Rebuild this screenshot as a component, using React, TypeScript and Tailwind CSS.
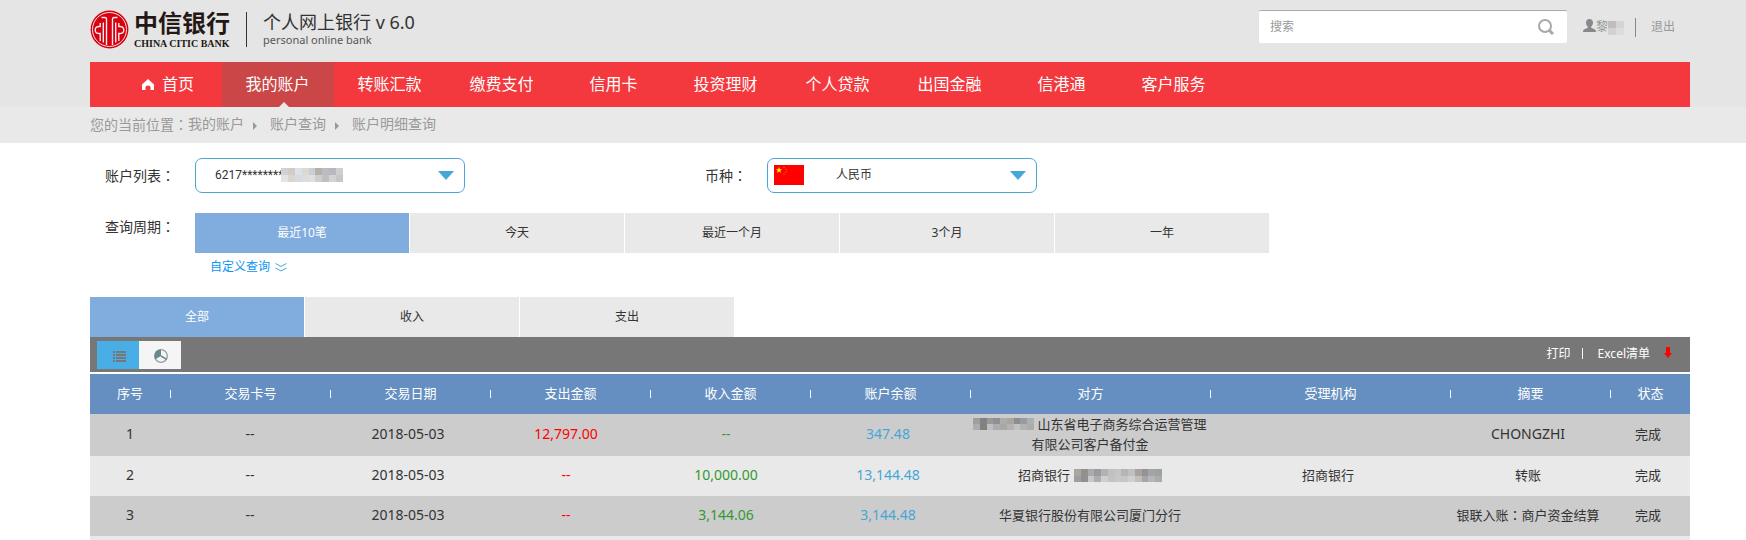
import React from "react";

const FONT = "font-['Noto_Sans','Noto_Sans_CJK_SC',sans-serif]";

const navItems = ["我的账户", "转账汇款", "缴费支付", "信用卡", "投资理财", "个人贷款", "出国金融", "信港通", "客户服务"];
const periods = ["最近10笔", "今天", "最近一个月", "3个月", "一年"];
const tabs = ["全部", "收入", "支出"];
const columns = [
  { name: "序号", width: "w-[5%]" },
  { name: "交易卡号", width: "w-[10%]" },
  { name: "交易日期", width: "w-[10%]" },
  { name: "支出金额", width: "w-[10%]" },
  { name: "收入金额", width: "w-[10%]" },
  { name: "账户余额", width: "w-[10%]" },
  { name: "对方", width: "w-[15%]" },
  { name: "受理机构", width: "w-[15%]" },
  { name: "摘要", width: "w-[10%]" },
  { name: "状态", width: "w-[5%]" },
];

function Mask({ rows, cell, className }: { rows: string[][]; cell: number; className: string }) {
  return (
    <svg
      className={className}
      viewBox={`0 0 ${rows[0].length * cell} ${rows.length * cell}`}
      preserveAspectRatio="none"
      shapeRendering="crispEdges"
      aria-hidden="true"
    >
      {rows.map((row, y) =>
        row.map((fill, x) => <rect key={`${x}-${y}`} x={x * cell} y={y * cell} width={cell} height={cell} fill={fill} />),
      )}
    </svg>
  );
}

const cardMask = [
  ["#cfd2d6", "#d3cbc6", "#dbe2e8", "#dad9d6", "#cccfd2", "#b8b1a9", "#b9bdc2", "#b5b8bc", "#cfcfcf"],
  ["#e3e3e3", "#dad5d1", "#d8dadd", "#dcdcdc", "#dde0e3", "#d0cec9", "#bfbfbf", "#d4d2d3", "#c5c8ca"],
];
const nameMask = [
  ["#c1bcbd", "#d2d4d6"],
  ["#d3d2d2", "#dbdcdd"],
];
const payeeMask = [
  ["#a09f9e", "#808285", "#9b9996", "#8e9095", "#adadac", "#aaa59f", "#8f8e8d", "#999ba2", "#adb0b2"],
  ["#adadad", "#85807c", "#bdc0c2", "#adadb0", "#a8a8a8", "#b2b2b4", "#c4c2c0", "#b2b2b3", "#acacac"],
];
const senderMask = [
  ["#aba59f", "#929190", "#a9abaf", "#9b9ba1", "#b1b2b4", "#c0c1c4", "#c5c6c6", "#b5b5b5", "#bfc0c4", "#a8a29d", "#929297", "#a2a4a5", "#9ea2a2"],
  ["#9f9e9d", "#92908f", "#c6c9cc", "#adadb1", "#d2cecc", "#c2c3c7", "#c7c9c7", "#c6c6c6", "#cecfd2", "#c2bdb7", "#a4a6a8", "#b6b5b8", "#a8acae"],
];

function BankEmblem() {
  return (
    <svg className="size-[39px]" viewBox="0 0 39 39" aria-hidden="true">
      <circle cx="19.5" cy="19.5" r="18.9" fill="#d7000f" />
      <circle cx="19.5" cy="19.5" r="17" fill="none" stroke="#f3e6e6" strokeWidth="1" />
      <g fill="none" stroke="#f6ecec" strokeWidth="1.4">
        <path d="M11.500 7.500h3.500q1.500 0 1.500 2V35M27.500 7.500h-3.500q-1.500 0-1.500 2V35" />
        <path d="M13.300 12.500v20M25.700 12.500v20" />
        <path d="M10.200 13v3.500q-5-.5-5 3.500t5 3.500V31M28.800 13v3.500q5-.5 5 3.500t-5 3.500V31" />
      </g>
    </svg>
  );
}

/* Vertically and horizontally centred full-width colon */
function Colon() {
  return <span className="font-['Noto_Sans_CJK_TC',sans-serif]">：</span>;
}

function Caret() {
  return (
    <svg className="pointer-events-none absolute right-[11px] top-[13px] h-[9px] w-4" viewBox="0 0 16 9" aria-hidden="true">
      <path d="M0 0h16L8 9z" fill="#46a7d6" />
    </svg>
  );
}

function Crumb({ children }: { children: React.ReactNode }) {
  return (
    <>
      <svg className="ml-[9px] mr-[13px] mt-1 h-2 w-1" viewBox="0 0 4 8" aria-hidden="true">
        <path d="M0 0l4 4-4 4z" fill="#999" />
      </svg>
      <a href="#">{children}</a>
    </>
  );
}

function SegmentButton({ label, active }: { label: string; active: boolean }) {
  return (
    <button
      type="button"
      className={`h-10 w-[214px] text-xs ${active ? "bg-[#80acde] text-white" : "bg-[#e9e9e9] text-[#333]"}`}
    >
      {label}
    </button>
  );
}

type Row = {
  no: string;
  date: string;
  out: string;
  income: string;
  balance: string;
  party: React.ReactNode;
  org: string;
  memo: React.ReactNode;
};

const rows: Row[] = [
  {
    no: "1",
    date: "2018-05-03",
    out: "12,797.00",
    income: "--",
    balance: "347.48",
    party: (
      <>
        <Mask rows={payeeMask} cell={7} className="mr-[3px] inline-block h-3 w-[61px] align-[-1px]" />
        山东省电子商务综合运营管理
        <br />
        有限公司客户备付金
      </>
    ),
    org: "",
    memo: <span className="text-sm leading-5">CHONGZHI</span>,
  },
  {
    no: "2",
    date: "2018-05-03",
    out: "--",
    income: "10,000.00",
    balance: "13,144.48",
    party: (
      <>
        招商银行
        <Mask rows={senderMask} cell={7} className="ml-1 inline-block h-[13px] w-[88px] align-[-2px]" />
      </>
    ),
    org: "招商银行",
    memo: "转账",
  },
  {
    no: "3",
    date: "2018-05-03",
    out: "--",
    income: "3,144.06",
    balance: "3,144.48",
    party: "华夏银行股份有限公司厦门分行",
    org: "",
    memo: (
      <>
        银联入账
        <Colon />
        商户资金结算
      </>
    ),
  },
];

export default function App() {
  return (
    <div className={`${FONT} h-screen overflow-hidden bg-white text-[#333]`}>
      <header className="bg-[#e5e5e5] pl-[90px] pr-14">
        <div className="flex h-[62px] items-start justify-between">
          <div className="flex items-start pt-[10px]">
            <a href="#" className="flex items-start gap-[5px] text-[#231815]">
              <BankEmblem />
              <span className="flex flex-col">
                <span className="font-['Noto_Sans_CJK_SC',sans-serif] text-2xl font-bold leading-6">中信银行</span>
                <span className="mt-1 whitespace-nowrap font-['Liberation_Serif',serif] text-[10px] font-bold leading-3">
                  CHINA CITIC BANK
                </span>
              </span>
            </a>
            <div className="ml-4 mt-[2px] h-[35px] w-px bg-[#333]" />
            <div className="ml-4 whitespace-nowrap">
              <div className="text-lg leading-6">个人网上银行 v 6.0</div>
              <div className="text-[11px] leading-3 text-[#555]">personal online bank</div>
            </div>
          </div>
          <div className="flex items-start pr-[15px] pt-[10px] text-xs text-[#999]">
            <div className="flex h-[33px] w-[308px] items-center rounded-[2px] border-t border-[#a9a9b0] bg-white pl-[11px] pr-[13px]">
              <input aria-label="搜索" placeholder="搜索" className="min-w-0 flex-1 outline-none placeholder:text-[#999]" />
              <button type="button" aria-label="开始搜索">
                <svg className="size-4" viewBox="0 0 16 16" fill="none" stroke="#a8a8a8" aria-hidden="true">
                  <circle cx="7" cy="7" r="6" strokeWidth="2" />
                  <path d="M11 11l4 4" strokeWidth="3" />
                </svg>
              </button>
            </div>
            <div className="ml-4 mt-2 flex h-[18px] items-center">
              <svg className="mb-[3px] h-[13px] w-[13px]" viewBox="0 0 13 13" aria-hidden="true">
                <path
                  d="M6.500 0c2.200 0 3.500 1.500 3.500 3.600C10 5.600 9 7 8.200 7.600v1.200L12 10.400q1 .5 1 2.600H0q0-2.100 1-2.600l3.800-1.600V7.600C4 7 3 5.600 3 3.600 3 1.500 4.300 0 6.500 0z"
                  fill="#888"
                />
              </svg>
              <span>黎</span>
              <Mask rows={nameMask} cell={8} className="mt-[2px] h-[14px] w-4" />
              <span className="ml-[11px] mt-[1px] h-[19px] w-px bg-[#888]" />
              <a href="#" className="ml-[15px]">
                退出
              </a>
            </div>
          </div>
        </div>
        <nav className="flex h-[45px] bg-[#f3393e] pl-5 text-base text-white">
          <a href="#" className="flex w-28 items-center justify-center gap-2 pb-px pl-1">
            <svg className="h-[11px] w-3" viewBox="0 0 12 11" aria-hidden="true">
              <path d="M6 0l6 5.500V11H8.500V8Q8.500 6.500 6 6.500T3.500 8v3H0V5.500z" fill="#fff" />
            </svg>
            首页
          </a>
          {navItems.map((item, i) => (
            <a
              key={item}
              href="#"
              className={`relative flex w-28 items-center justify-center pb-px pr-px ${i === 0 ? "bg-[#ca4647]" : ""}`}
            >
              {item}
              {i === 0 && (
                <svg className="absolute bottom-0 left-[57px] h-[5px] w-[10px]" viewBox="0 0 10 5" aria-hidden="true">
                  <path d="M5 0l5 5H0z" fill="#e9e9e9" />
                </svg>
              )}
            </a>
          ))}
        </nav>
      </header>

      <div className="flex h-9 items-center bg-[#e9e9e9] pb-[2px] pl-[90px] text-sm text-[#999]">
        <span>
          您的当前位置
          <Colon />
        </span>
        <a href="#">我的账户</a>
        <Crumb>账户查询</Crumb>
        <Crumb>账户明细查询</Crumb>
      </div>

      <main className="pl-[90px] pr-14">
        <form className="px-[15px] pt-[15px]">
          <div className="flex items-center">
            <div className="flex w-[600px] items-center">
              <label htmlFor="account" className="w-[90px] text-sm">
                账户列表
                <Colon />
              </label>
              <div className="relative">
                <select
                  id="account"
                  className="h-[35px] w-[270px] appearance-none rounded-[7px] border border-[#46a7d6] bg-white pb-[2px] pl-[19px] font-['Roboto',sans-serif] text-xs"
                >
                  <option>6217********</option>
                </select>
                <Mask rows={cardMask} cell={7} className="pointer-events-none absolute left-[86px] top-[10px] h-[14px] w-[62px]" />
                <Caret />
              </div>
            </div>
            <label htmlFor="currency" className="w-[62px] text-sm">
              币种
              <Colon />
            </label>
            <div className="relative">
              <select
                id="currency"
                className="h-[35px] w-[270px] appearance-none rounded-[7px] border border-[#46a7d6] bg-white pb-[2px] pl-[68px] text-xs"
              >
                <option>人民币</option>
              </select>
              <svg className="pointer-events-none absolute left-[7px] top-[7px] h-5 w-[30px]" viewBox="0 0 30 20" aria-hidden="true">
                <path d="M0 0h30v20H0z" fill="#fe0000" />
                <path d="M5 2l.8 2.200h2.400L6.300 5.600l.7 2.200L5 6.400 3 7.800l.7-2.200L1.800 4.200h2.400z" fill="#ff0" />
                <g fill="#e08000">
                  <circle cx="10" cy="2.500" r=".7" />
                  <circle cx="12" cy="4.500" r=".7" />
                  <circle cx="12" cy="7" r=".7" />
                  <circle cx="10" cy="9" r=".7" />
                </g>
              </svg>
              <Caret />
            </div>
          </div>
          <div className="mt-5 flex items-start">
            <span className="w-[90px] pt-[3px] text-sm">
              查询周期
              <Colon />
            </span>
            <div>
              <div className="flex gap-px">
                {periods.map((p, i) => (
                  <SegmentButton key={p} label={p} active={i === 0} />
                ))}
              </div>
              <a href="#" className="ml-[15px] mt-[6px] flex h-4 items-center gap-[5px] text-xs text-[#0b95f5]">
                自定义查询
                <svg className="h-[9px] w-3" viewBox="0 0 12 9" fill="none" stroke="#46a7d6" aria-hidden="true">
                  <path d="M.5.500l5.500 3 5.500-3M.5 5l5.500 3 5.500-3" />
                </svg>
              </a>
            </div>
          </div>
        </form>

        <div className="mt-[22px] flex gap-px">
          {tabs.map((t, i) => (
            <SegmentButton key={t} label={t} active={i === 0} />
          ))}
        </div>
        <div className="flex h-[35px] items-center justify-between bg-[#777] pl-[7px] pr-[18px]">
          <div className="flex pt-px">
            <button type="button" aria-label="列表" className="flex h-7 w-[42px] items-center justify-center bg-[#4aaee6] pl-[3px] pt-[3px]">
              <svg className="h-[11px] w-[13px]" viewBox="0 0 13 11" fill="#777" shapeRendering="crispEdges" aria-hidden="true">
                <path d="M0 0h2v2H0zM3 0h10v2H3zM0 3h2v2H0zM3 3h10v2H3zM0 6h2v2H0zM3 6h10v2H3zM0 9h2v2H0zM3 9h10v2H3z" />
              </svg>
            </button>
            <button type="button" aria-label="图表" className="flex h-7 w-[42px] items-center justify-center bg-[#f5f5f5] pl-[2px] pt-[2px]">
              <svg className="size-[14px]" viewBox="0 0 14 14" aria-hidden="true">
                <circle cx="7" cy="7" r="6.300" fill="#f5f5f5" stroke="#8fa0a6" strokeWidth="1.300" />
                <path d="M7 7V.4A6.600 6.600 0 0 0 1.300 10.300z" fill="#6a868e" />
                <path d="M7 7l5.700 3.300" stroke="#6a868e" strokeWidth="1.500" />
              </svg>
            </button>
          </div>
          <div className="flex items-center pb-[2px] text-xs text-white">
            <a href="#">打印</a>
            <span className="ml-[11px] mr-[15px] h-[11px] w-px bg-white" />
            <a href="#" className="flex items-center">
              Excel清单
              <svg className="mb-[2px] ml-[14px] h-[11px] w-2" viewBox="0 0 8 11" aria-hidden="true">
                <path d="M2 0h4v6h2l-4 5-4-5h2z" fill="red" />
              </svg>
            </a>
          </div>
        </div>

        <table className="mt-[2px] w-full table-fixed border-collapse text-center text-[13px] leading-5">
          <thead>
            <tr className="h-10 bg-[#658fc1] text-white">
              {columns.map((c, i) => (
                <th key={c.name} className={`${c.width} p-0 pb-[2px] font-normal`}>
                  <div className="flex items-center">
                    {i > 0 && <span className="mt-[2px] h-2 w-px bg-white" />}
                    <span className="flex-1">{c.name}</span>
                  </div>
                </th>
              ))}
            </tr>
          </thead>
          <tbody>
            {rows.map((r) => (
              <tr key={r.no} className="h-10 odd:bg-[#ccc] even:bg-[#e9e9e9]">
                <td className="p-0 pb-[2px] text-sm">{r.no}</td>
                <td className="p-0 pb-[2px] text-sm">--</td>
                <td className="p-0 pb-[2px] pr-1 text-sm">{r.date}</td>
                <td className="p-0 pb-[2px] pr-2 text-sm text-[#f00]">{r.out}</td>
                <td className="p-0 pb-[2px] pr-2 text-sm text-[#339933]">{r.income}</td>
                <td className="p-0 pb-[2px] pr-1 text-sm text-[#46a7d6]">{r.balance}</td>
                <td className="whitespace-nowrap p-0 pb-[2px]">{r.party}</td>
                <td className="p-0 pb-[2px] pr-1">{r.org}</td>
                <td className="whitespace-nowrap p-0 pb-[2px] pr-1">{r.memo}</td>
                <td className="p-0 pb-[2px] pr-1">完成</td>
              </tr>
            ))}
            <tr className="h-10 bg-[#e9e9e9]">
              <td colSpan={10} />
            </tr>
          </tbody>
        </table>
      </main>
    </div>
  );
}
